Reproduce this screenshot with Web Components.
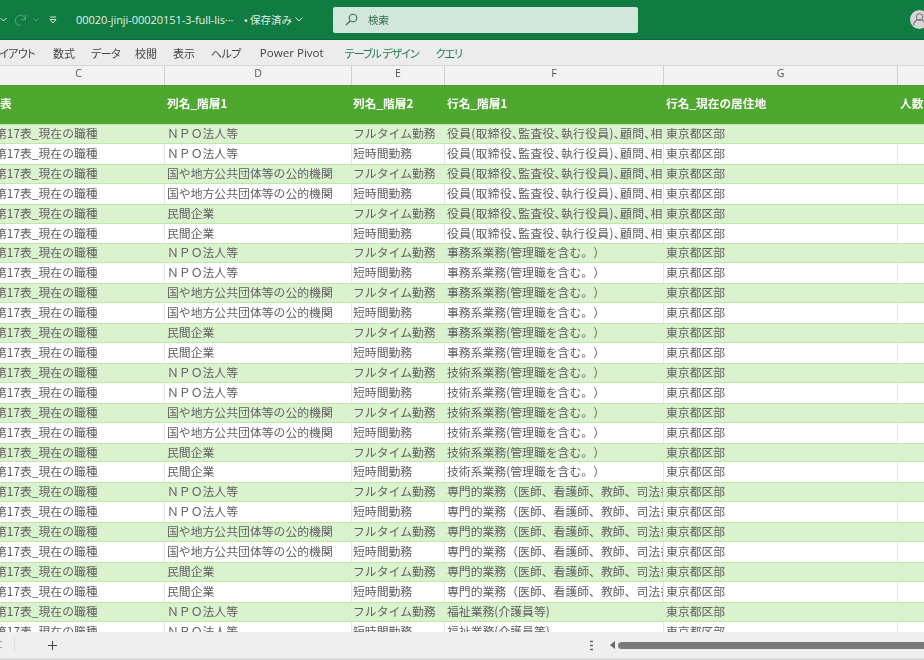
<!DOCTYPE html>
<html lang="ja">
<head>
<meta charset="utf-8">
<title>Excel</title>
<style>
html, body { margin: 0; height: 660px; overflow: hidden; background: #fff; }
body { display: flex; flex-direction: column; font-family: "Noto Sans CJK JP", "Noto Sans", sans-serif; }
</style>
</head>
<body>
<xl-titlebar filename="00020-jinji-00020151-3-full-lis···" status="保存済み"></xl-titlebar>
<xl-ribbon></xl-ribbon>
<xl-columns></xl-columns>
<xl-sheet></xl-sheet>
<xl-statusbar></xl-statusbar>

<script>
const COLS = '172px 187px 93px 219px 234px 60px';

class XlTitlebar extends HTMLElement {
    connectedCallback() {
        this.attachShadow({mode: 'open'}).innerHTML = `
<style>
:host { display: flex; flex: none; height: 40px; box-sizing: border-box; background: #107c41; color: #e4f0e9; align-items: center; font-size: 10.5px; filter: blur(.35px); border-bottom: 1px solid #0b6b37; }
svg { display: block; flex: none; }
.file { margin-left: 19px; width: 160px; white-space: nowrap; overflow: hidden; font-family: "Open Sans", sans-serif; font-size: 11px; letter-spacing: -.05px; }
.saved { margin-left: 8px; width: 60px; display: flex; align-items: center; gap: 3px; white-space: nowrap; }
.search { margin-left: 29px; width: 305px; height: 26px; box-sizing: border-box; background: #d2e6dc; border-radius: 2px; display: flex; align-items: center; padding-left: 12px; gap: 10px; color: #2d6a4a; font-size: 10.5px; }
.avatar { margin-left: auto; margin-right: -5px; width: 19px; height: 19px; border-radius: 50%; background: #d6d6d6; }
</style>
<svg width="7" height="5" viewBox="0 0 7 5"><path d="M.5 1 3.500 4 6.500 1" fill="none" stroke="#d5e8dd"/></svg>
<svg width="14" height="14" viewBox="0 0 14 14" style="margin-left:7px"><path d="M11.500 2v4.500H7M11.200 6A5 5 0 1 0 6.500 12.500" fill="none" stroke="#5fa47f"/></svg>
<svg width="6" height="4" viewBox="0 0 6 4" style="margin-left:5px"><path d="M.5.500 3 3 5.500.500" fill="none" stroke="#5fa47f"/></svg>
<svg width="8" height="8" viewBox="0 0 8 8" style="margin-left:10px"><path d="M1 1h6M1 3.500h6L4 7z" fill="none" stroke="#cfe5d9"/></svg>
<span class="file">${this.getAttribute('filename')}</span>
<span class="saved">• ${this.getAttribute('status')}
<svg width="8" height="5" viewBox="0 0 8 5"><path d="M.5.500 4 4 7.500.500" fill="none" stroke="#e4f0e9"/></svg></span>
<div class="search">
<svg width="13" height="13" viewBox="0 0 13 13"><circle cx="8" cy="5" r="3.800" fill="none" stroke="#2d6a4a" stroke-width="1.100"/><path d="M5.200 7.800 1 12" stroke="#2d6a4a" stroke-width="1.200"/></svg>
<span>検索</span>
</div>
<div class="avatar"><svg width="19" height="19" viewBox="0 0 19 19"><circle cx="9.500" cy="7" r="3.200" fill="none" stroke="#777" stroke-width="1.100"/><path d="M3.500 15.500a6 6 0 0 1 12 0" fill="none" stroke="#777" stroke-width="1.100"/></svg></div>`;
    }
}

class XlRibbon extends HTMLElement {
    connectedCallback() {
        // name, left gap, class
        const tabs = [['レイアウト', -10, 'kana'], ['数式', 18, ''], ['データ', 16, 'kana'], ['校閲', 15, ''], ['表示', 16, ''], ['ヘルプ', 16, 'kana'], ['Power Pivot', 19, 'latin'], ['テーブル デザイン', 21, 'ctx'], ['クエリ', 17, 'ctx']];
        this.attachShadow({mode: 'open'}).innerHTML = `
<style>
:host { display: flex; flex: none; height: 25px; box-sizing: border-box; background: #ececec; align-items: center; font-size: 11px; color: #444; white-space: pre; filter: blur(.35px); overflow: hidden; font-feature-settings: "palt"; }
.kana { letter-spacing: -.6px; }
.ctx { color: #1d7a4c; letter-spacing: -1px; }
.latin { font-family: "Open Sans", sans-serif; font-size: 11.6px; }
</style>
${tabs.map(t => `<span class="${t[2]}" style="margin-left:${t[1]}px">${t[0]}</span>`).join('')}`;
    }
}

class XlColumns extends HTMLElement {
    connectedCallback() {
        this.attachShadow({mode: 'open'}).innerHTML = `
<style>
:host { display: grid; flex: none; grid-template-columns: ${COLS}; height: 20px; margin-left: -7px; background: #f2f2f2; box-sizing: border-box; border-top: 1px solid #d6d6d6; font: 10.5px "Open Sans", sans-serif; color: #555; filter: blur(.25px); }
span { display: flex; align-items: center; justify-content: center; border-right: 1px solid #d0d0d0; padding-bottom: 5px; box-sizing: border-box; }
</style>
${'CDEFGH'.split('').map(c => `<span>${c == 'H' ? '' : c}</span>`).join('')}`;
    }
}

class XlRow extends HTMLElement {
    connectedCallback() {
        const kind = this.getAttribute('kind');
        this.attachShadow({mode: 'open'}).innerHTML = `
<style>
:host { display: grid; grid-template-columns: ${COLS}; height: 19.92px; box-sizing: border-box; font-size: 11.85px; line-height: 18px; color: #606060; background: #fff; text-spacing-trim: space-all; }
:host([band]) { background: #dbf2cf; box-shadow: inset 0 1px 0 #bde8a9, inset 0 -1px 0 #bde8a9; }
span { padding: 0 2px; overflow: hidden; white-space: nowrap; box-sizing: border-box; border-right: 1px solid #e6e6e6; }
:host([band]) span { border-right-color: transparent; }
span.e { padding-left: 1px; }
span.tight { font-feature-settings: "palt"; letter-spacing: .3px; }
</style>
${JSON.parse(this.getAttribute('cells')).map((c, i) => `<span class="${i == 2 ? 'e' : ''} ${i == 3 && kind == 'tight' ? 'tight' : ''}">${c}</span>`).join('')}`;
    }
}

class XlSheet extends HTMLElement {
    connectedCallback() {
        const orgs = ['ＮＰＯ法人等', '国や地方公共団体等の公的機関', '民間企業'];
        const jobs = [
            ['役員(取締役、監査役、執行役員)、顧問、相談役', 6, 'tight'],
            ['事務系業務(管理職を含む。）', 6],
            ['技術系業務(管理職を含む。）', 6],
            ['専門的業務（医師、看護師、教師、司法書士等）', 6],
            ['福祉業務(介護員等)', 2]
        ];
        let rows = '';
        let n = 0;
        for (const [job, count, kind] of jobs) {
            for (let i = 0; i < count; i++, n++) {
                const cells = ['第17表_現在の職種', orgs[Math.floor(i / 2) % 3], i % 2 ? '短時間勤務' : 'フルタイム勤務', job, '東京都区部', ''];
                rows += `<xl-row ${n % 2 ? '' : 'band'} kind="${kind || ''}" cells='${JSON.stringify(cells)}'></xl-row>`;
            }
        }
        this.attachShadow({mode: 'open'}).innerHTML = `
<style>
:host { display: block; flex: 1; min-height: 0; overflow: hidden; margin-left: -7px; filter: blur(.4px); }
.head { display: grid; grid-template-columns: ${COLS}; height: 39px; background: #4ea72e; color: #fff; font-size: 11.7px; font-weight: 700; align-items: center; box-sizing: border-box; border-top: 1px solid #469a28; padding-bottom: 6px; }
.head span { padding: 0 2px; white-space: nowrap; overflow: hidden; }
.head span:nth-child(3) { padding-left: 1px; }
.head .c { padding-left: 7px; }
</style>
<div class="head"><span class="c">表</span><span>列名_階層1</span><span>列名_階層2</span><span>行名_階層1</span><span>行名_現在の居住地</span><span>人数</span></div>
${rows}`;
    }
}

class XlStatusbar extends HTMLElement {
    connectedCallback() {
        this.attachShadow({mode: 'open'}).innerHTML = `
<style>
:host { display: flex; flex: none; height: 28px; box-sizing: border-box; background: #efefef; border-bottom: 2px solid #dcdcdc; align-items: center; position: relative; z-index: 1; }
svg { display: block; flex: none; }
.sep { width: 1px; height: 14px; background: #dedede; margin-left: 12px; }
.track { margin-left: auto; width: 318px; display: flex; align-items: center; gap: 3px; margin-right: -4px; }
.thumb { flex: 1; height: 7px; background: #7a7a7a; border-radius: 3.500px; }
</style>
<svg width="2" height="10" viewBox="0 0 2 10"><path d="M.5 1.500h1M.5 7.500h1" stroke="#555"/></svg>
<div class="sep"></div>
<svg width="11" height="11" viewBox="0 0 11 11" style="margin-left:32px"><path d="M5.500 1v9M1 5.500h9" stroke="#444"/></svg>
<svg width="3" height="11" viewBox="0 0 3 11" style="margin-left:532px"><path d="M0 1.500h3M0 5.500h3M0 9.500h3" stroke="#666" stroke-width="1.500"/></svg>
<div class="track">
<svg width="5" height="8" viewBox="0 0 5 8"><path d="M5 0v8L0 4z" fill="#666"/></svg>
<div class="thumb"></div>
</div>`;
    }
}

customElements.define('xl-titlebar', XlTitlebar);
customElements.define('xl-ribbon', XlRibbon);
customElements.define('xl-columns', XlColumns);
customElements.define('xl-row', XlRow);
customElements.define('xl-sheet', XlSheet);
customElements.define('xl-statusbar', XlStatusbar);
</script>
</body>
</html>
